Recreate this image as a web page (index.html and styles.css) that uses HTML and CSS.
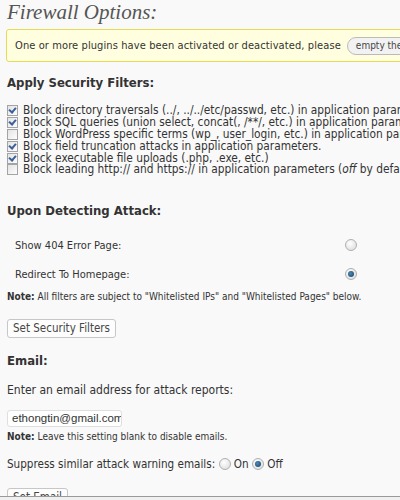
FILE: index.html
```html
<!DOCTYPE html>
<html lang="en">
<head>
    <meta charset="UTF-8">
    <title>Firewall Options</title>
    <link rel="stylesheet" href="styles.css">
</head>
<body>
    <div class="wrap">
        <h2 class="titulo">Firewall Options:</h2>

        <div class="aviso">
            One or more plugins have been activated or deactivated, please
            <button class="pilula">empty the cache</button>
        </div>

        <h3>Apply Security Filters:</h3>
        <ul class="filtros">
            <li><span class="caixa marcada"></span><span>Block directory traversals (../, ../../etc/passwd, etc.) in application parameters.</span></li>
            <li><span class="caixa marcada"></span><span>Block SQL queries (union select, concat(, /**/, etc.) in application parameters.</span></li>
            <li><span class="caixa"></span><span>Block WordPress specific terms (wp_, user_login, etc.) in application parameters.</span></li>
            <li><span class="caixa marcada"></span><span>Block field truncation attacks in application parameters.</span></li>
            <li><span class="caixa marcada"></span><span>Block executable file uploads (.php, .exe, etc.)</span></li>
            <li><span class="caixa"></span><span>Block leading http:// and https:// in application parameters (<em>off</em> by default).</span></li>
        </ul>

        <h3>Upon Detecting Attack:</h3>
        <div class="ataque">
            <div class="linha-ataque">
                <span>Show 404 Error Page:</span>
                <span class="radio"></span>
            </div>
            <div class="linha-ataque">
                <span>Redirect To Homepage:</span>
                <span class="radio marcado"></span>
            </div>
        </div>
        <p class="nota"><strong>Note:</strong> All filters are subject to "Whitelisted IPs" and "Whitelisted Pages" below.</p>
        <button class="botao">Set Security Filters</button>

        <h3 class="titulo-email">Email:</h3>
        <p class="texto">Enter an email address for attack reports:</p>
        <input type="text" class="campo" value="ethongtin@gmail.com">
        <p class="nota nota-email"><strong>Note:</strong> Leave this setting blank to disable emails.</p>
        <p class="texto suprimir">Suppress similar attack warning emails:
            <span class="radio"></span> On
            <span class="radio marcado"></span> Off
        </p>
        <button class="botao botao-email">Set Email</button>
    </div>
    <div class="rodape"></div>
</body>
</html>
```

FILE: styles.css
```css
html, body {
    margin: 0;
    height: 500px;
    overflow: hidden;
}

body {
    background-color: #f9f9f9;
    color: #333;
    font-family: "DejaVu Sans Condensed", "DejaVu Sans", sans-serif;
    font-stretch: condensed;
    position: relative;
}

.wrap {
    padding-left: 7px;
    white-space: nowrap;
}

.titulo {
    font-family: "Liberation Serif", serif;
    font-style: italic;
    font-weight: normal;
    font-size: 21px;
    line-height: 24px;
    color: #555;
    margin: 0;
}

.aviso {
    margin: 5px 0 0 -1px;
    width: 420px;
    height: 31px;
    display: flex;
    align-items: center;
    padding-left: 8px;
    background-color: #ffffe0;
    border: 1px solid #e6db55;
    border-radius: 3px;
    font-size: 11px;
    letter-spacing: 0.1px;
    color: #333;
}

.pilula {
    margin-left: 6px;
    height: 18px;
    padding: 0 8px;
    border: 1px solid #bbb;
    border-radius: 9px;
    background: #f2f2f2;
    font-family: inherit;
    font-stretch: condensed;
    font-size: 10px;
    color: #464646;
}

h3 {
    font-size: 13px;
    font-weight: bold;
    margin: 13px 0 14px;
    line-height: 16px;
    color: #333;
}

.filtros {
    list-style: none;
    margin: 0 0 27px;
    padding: 0;
    font-size: 11.8px;
}

.filtros li {
    height: 11.8px;
    line-height: 11px;
    display: flex;
    align-items: center;
}

.filtros em {
    font-style: italic;
}

.caixa {
    width: 9px;
    height: 9px;
    border: 1px solid #a4a4a4;
    background: linear-gradient(135deg, #e3e3e3, #fdfdfd);
    margin-right: 5px;
    position: relative;
    flex: none;
}

.marcada::after {
    content: "";
    position: absolute;
    left: 2px;
    top: 0px;
    width: 3px;
    height: 5px;
    border: solid #3b5f9a;
    border-width: 0 2px 2px 0;
    transform: rotate(40deg);
}

.ataque {
    margin-top: -2px;
    padding-left: 8px;
    font-size: 11px;
    width: 342px;
}

.linha-ataque {
    display: flex;
    justify-content: space-between;
    align-items: center;
    height: 29px;
}

.radio {
    display: inline-block;
    width: 10px;
    height: 10px;
    border: 1px solid #b0b0b0;
    border-radius: 50%;
    background: radial-gradient(circle at 40% 35%, #ffffff, #d8d8d8);
    vertical-align: middle;
    position: relative;
}

.radio.marcado::after {
    content: "";
    position: absolute;
    left: 2px;
    top: 2px;
    width: 6px;
    height: 6px;
    border-radius: 50%;
    background: radial-gradient(circle at 40% 40%, #4b8bb8, #123e66);
}

.nota {
    font-size: 10px;
    margin: 2px 0 0;
    line-height: 12px;
}

.nota-email {
    margin-top: 4px;
}

.botao {
    margin-top: 16px;
    height: 19px;
    padding: 0 5px;
    border: 1px solid #c7c7c7;
    border-radius: 3px;
    background: #fdfdfd;
    font-family: inherit;
    font-stretch: condensed;
    font-size: 11.5px;
    color: #464646;
}

.titulo-email {
    margin-top: 15px;
}

.texto {
    font-size: 12px;
    margin: 0;
    line-height: 14px;
}

.campo {
    display: block;
    margin-top: 13px;
    width: 109px;
    height: 15px;
    padding: 0 0 0 4px;
    border: 1px solid #dfdfdf;
    border-radius: 3px;
    background: #fff;
    font-family: "Liberation Sans", sans-serif;
    font-size: 11.5px;
    color: #333;
}

.suprimir {
    margin-top: 14px;
    font-size: 11.6px;
}

.botao-email {
    margin-top: 17px;
}

.rodape {
    position: absolute;
    left: 0;
    right: 0;
    top: 496px;
    height: 4px;
    border-top: 1px solid #9a9a9a;
    background: #f0f0f0;
}
```
